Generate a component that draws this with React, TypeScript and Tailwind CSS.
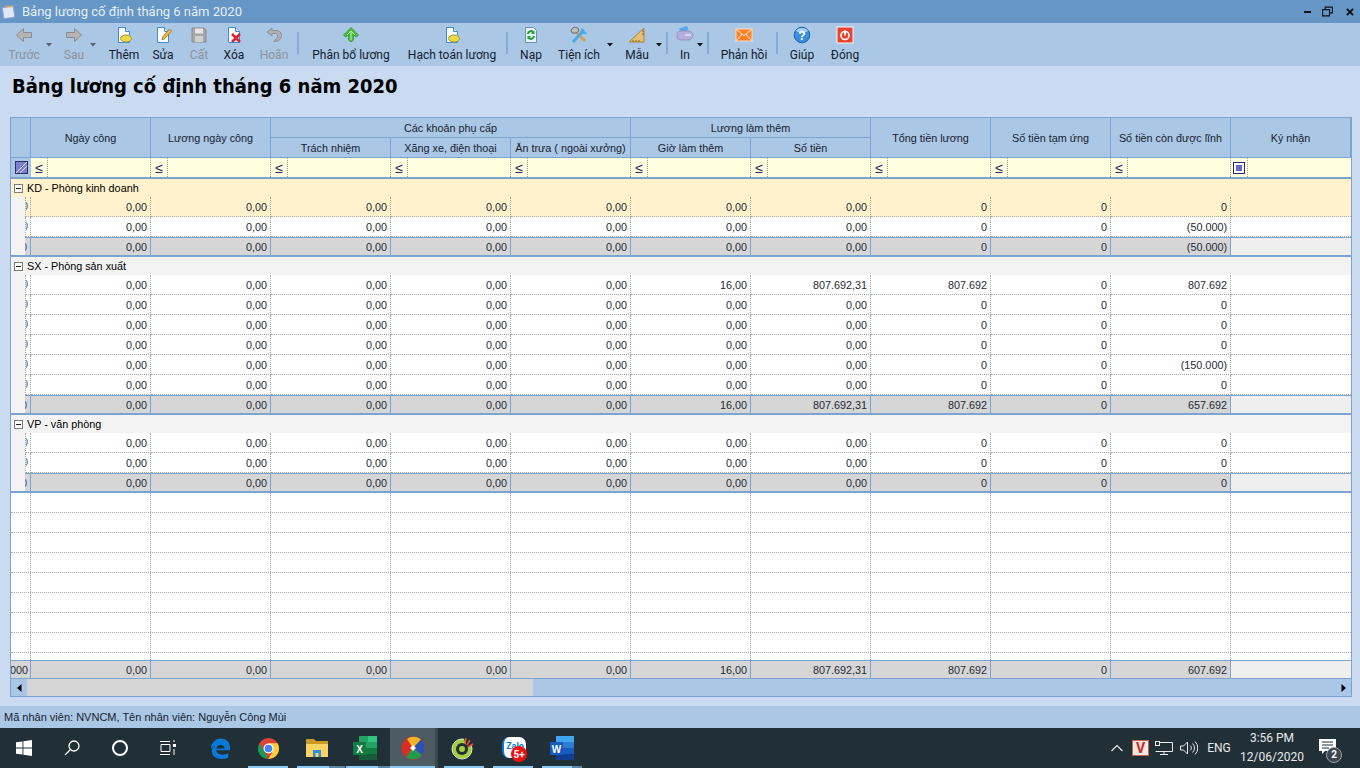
import React from "react";

const BORDER = "border-[#7da3d2]";

type Row = { kind: "group" | "data" | "sum"; label?: string; vals?: string[]; active?: boolean; first?: boolean };

const mk = (gio: string, tien: string, tong: string, linh: string) => [
  "0,00", "0,00", "0,00", "0,00", "0,00", gio, tien, tong, "0", linh, "",
];
const zero = (linh = "0") => mk("0,00", "0,00", "0", linh);

const rows: Row[] = [
  { kind: "group", label: "KD - Phòng kinh doanh", first: true },
  { kind: "data", vals: zero(), active: true },
  { kind: "data", vals: zero("(50.000)") },
  { kind: "sum", vals: zero("(50.000)") },
  { kind: "group", label: "SX - Phòng sản xuất" },
  { kind: "data", vals: mk("16,00", "807.692,31", "807.692", "807.692") },
  { kind: "data", vals: zero() },
  { kind: "data", vals: zero() },
  { kind: "data", vals: zero() },
  { kind: "data", vals: zero("(150.000)") },
  { kind: "data", vals: zero() },
  { kind: "sum", vals: mk("16,00", "807.692,31", "807.692", "657.692") },
  { kind: "group", label: "VP - văn phòng" },
  { kind: "data", vals: zero() },
  { kind: "data", vals: zero() },
  { kind: "sum", vals: zero() },
];

const Ico = ({ children, size = 18 }: { children: React.ReactNode; size?: number }) => (
  <svg width={size} height={size} viewBox="0 0 18 18">{children}</svg>
);

const Doc = ({ children }: { children?: React.ReactNode }) => (
  <Ico>
    <path d="M3.500 1.500h7l4 4v11h-11z" fill="#fff" stroke="#3f8fd0" />
    <path d="M10.500 1.500v4h4" fill="#cfe6f8" stroke="#3f8fd0" />
    {children}
  </Ico>
);

const icons: Record<string, React.ReactNode> = {
  back: (
    <Ico>
      <path d="M8.500 2.500 1.500 9l7 6.500v-4h8v-5h-8z" fill="#b4b4b4" stroke="#8c8c8c" />
    </Ico>
  ),
  next: (
    <Ico>
      <path d="M9.500 2.500 16.500 9l-7 6.500v-4h-8v-5h8z" fill="#b4b4b4" stroke="#8c8c8c" />
    </Ico>
  ),
  add: (
    <Doc>
      <ellipse cx="11" cy="12.500" rx="5.500" ry="3.500" fill="#ecd94a" stroke="#a59a24" />
    </Doc>
  ),
  edit: (
    <Doc>
      <path d="M8 14l1-3.500L15.500 3l2 2L11 12.500z" fill="#f0b93a" stroke="#9a6f12" strokeWidth="0.800" />
    </Doc>
  ),
  save: (
    <Ico>
      <path d="M2 2h12l2 2v12H2z" fill="#a6a6a6" stroke="#8b8b8b" />
      <rect x="5" y="2.500" width="8" height="5" fill="#e6e6e6" />
      <rect x="5" y="10" width="8" height="6" fill="#cfcfcf" />
    </Ico>
  ),
  del: (
    <Doc>
      <path d="M7 8l8 8M15 8l-8 8" stroke="#d8262c" strokeWidth="2.600" />
    </Doc>
  ),
  undo: (
    <Ico>
      <path d="M7 2 2 6l5 4V7.500h3.500c2.500 0 3 3.500.5 5.500l-2 2.500c5 0 7.500-3 7.500-6 0-3.500-2.500-5-5.500-5H7z" fill="#b0b0b0" stroke="#8f8f8f" />
    </Ico>
  ),
  up: (
    <Ico>
      <path d="M9 1.500 16.500 9l-2 2L11.500 9v5L9 16l-2.500-2V9L3.500 11l-2-2z" fill="#4cbb40" stroke="#2c9a2c" strokeWidth="0.800" />
      <path d="M9 5v9M9 5 5 9M9 5l4 4" fill="none" stroke="#c8efb8" />
    </Ico>
  ),
  reload: (
    <Ico>
      <path d="M3.500 1.500h8l3 3v12h-11z" fill="#e8f0f8" stroke="#6d8fb0" />
      <path d="M6 8a3 3 0 0 1 5.500-1.500M12 10a3 3 0 0 1-5.500 1.500" fill="none" stroke="#1f9e36" strokeWidth="2" />
      <path d="M12.500 4.500v3.500H9zM5.500 13.500V10H9z" fill="#1f9e36" />
    </Ico>
  ),
  tools: (
    <Ico>
      <path d="M4 4l11 11" stroke="#d99a4a" strokeWidth="2.600" />
      <path d="M3 16 14 4" stroke="#4fa8e8" strokeWidth="3" />
      <path d="M12 2.500a3.500 3.500 0 0 0 4.500 4.500" fill="none" stroke="#4fa8e8" strokeWidth="2" />
      <path d="M2 7 1 4l3-3 4 1 1 3-3 2z" fill="#bdbdbd" stroke="#6f6f6f" />
    </Ico>
  ),
  ruler: (
    <Ico>
      <path d="M1 16 16 2v14z" fill="#e7bf72" stroke="#a9823a" />
      <path d="M11 12l2-2v2z" fill="#abc7e6" />
      <path d="M5 16v-2M8 16v-2M11 16v-2M16 5h-2M16 8h-2" stroke="#8a6526" />
    </Ico>
  ),
  print: (
    <Ico>
      <path d="M3 2.500 11 0l1.500 4-8 2.500z" fill="#5aa7e6" />
      <path d="M1 8c0-2 2-3 4-3h7c3 0 5 2 5 4.500S15 14 12 14H5c-2 0-4-1-4-3z" fill="#b6aedc" stroke="#8f86bc" strokeWidth="0.700" />
      <path d="M9 9h6" stroke="#e6e2f6" strokeWidth="1.500" />
    </Ico>
  ),
  mail: (
    <Ico>
      <rect x="1" y="3" width="16" height="12" fill="#f9822a" stroke="#ffd9bb" />
      <path d="M1.500 3.500 9 9.500l7.500-6M1.500 14.500 7 8M16.500 14.500 11 8" fill="none" stroke="#ffe6d2" />
    </Ico>
  ),
  help: (
    <Ico>
      <circle cx="9" cy="9" r="7.800" fill="#3b8fe2" stroke="#1f5fa8" />
      <path d="M9 2a7 5 0 0 1 6 3c-3 2-9 2-12 0a7 5 0 0 1 6-3z" fill="#a3d0f7" />
      <text x="9" y="13.500" textAnchor="middle" fontSize="12" fontWeight="700" fill="#fff" fontFamily="Liberation Sans">?</text>
    </Ico>
  ),
  power: (
    <Ico>
      <rect x="1" y="1" width="16" height="16" fill="#e8432f" stroke="#f8f8f8" />
      <circle cx="9" cy="9.500" r="4" fill="none" stroke="#fff" strokeWidth="1.600" />
      <path d="M9 4.500v5" stroke="#fff" strokeWidth="1.800" />
    </Ico>
  ),
};

function TBtn({ label, icon, cls, off }: { label: string; icon: string; cls: string; off?: boolean }) {
  return (
    <div className={`flex flex-col items-center shrink-0 ${cls}`}>
      <div className="h-[18px] mt-[3px] flex items-center">{icons[icon]}</div>
      <span className={`mt-[3px] text-[12px] leading-[16px] whitespace-nowrap ${off ? "text-[#8d9299]" : "text-[#14202c]"}`}>{label}</span>
    </div>
  );
}

const Caret = ({ cls, off }: { cls: string; off?: boolean }) => (
  <div className={`w-[6px] h-[5px] shrink-0 mt-[20px] ${cls}`}>
    <svg width="6" height="4" viewBox="0 0 6 4"><path d="M0 0h6L3 3.500z" fill={off ? "#59626d" : "#10161c"} /></svg>
  </div>
);
const Sep = ({ cls }: { cls: string }) => <div className={`w-[2px] h-[22px] mt-[9px] bg-[#86abd8] shrink-0 ${cls}`} />;

function Toolbar() {
  return (
    <div className="h-[43px] bg-[#abc7e6] flex pl-[4px] items-start">
      <TBtn off label="Trước" icon="back" cls="w-[40px]" />
      <Caret off cls="ml-[2px] mr-[2px]" />
      <TBtn off label="Sau" icon="next" cls="ml-[4px] w-[32px]" />
      <Caret off cls="" />
      <TBtn label="Thêm" icon="add" cls="ml-[12px] w-[32px]" />
      <TBtn label="Sửa" icon="edit" cls="ml-[8px] w-[30px]" />
      <TBtn off label="Cất" icon="save" cls="ml-[6px] w-[30px]" />
      <TBtn label="Xóa" icon="del" cls="ml-[4px] w-[32px]" />
      <TBtn off label="Hoãn" icon="undo" cls="ml-[4px] w-[40px]" />
      <Sep cls="ml-[3px]" />
      <TBtn label="Phân bổ lương" icon="up" cls="ml-[12px] w-[80px]" />
      <TBtn label="Hạch toán lương" icon="add" cls="ml-[12px] w-[98px]" />
      <Sep cls="ml-[5px]" />
      <TBtn label="Nạp" icon="reload" cls="ml-[8px] w-[30px]" />
      <TBtn label="Tiện ích" icon="tools" cls="ml-[10px] w-[46px]" />
      <Caret cls="ml-[5px]" />
      <TBtn label="Mẫu" icon="ruler" cls="ml-[9px] w-[30px]" />
      <Caret cls="ml-[4px]" />
      <Sep cls="ml-[4px]" />
      <TBtn label="In" icon="print" cls="ml-[7px] w-[20px]" />
      <Caret cls="ml-[2px]" />
      <Sep cls="ml-[4px]" />
      <TBtn label="Phản hồi" icon="mail" cls="ml-[10px] w-[50px]" />
      <Sep cls="ml-[7px]" />
      <TBtn label="Giúp" icon="help" cls="ml-[9px] w-[30px]" />
      <TBtn label="Đóng" icon="power" cls="ml-[11px] w-[34px]" />
    </div>
  );
}

function TitleBar() {
  return (
    <div className="h-[23px] bg-[#6596c6] flex items-center pl-[2px] pr-[6px]">
      <svg width="14" height="14" viewBox="0 0 14 14">
        <rect x="1" y="2" width="11" height="11" rx="1" fill="#dfe9fb" stroke="#8fa5e0" transform="rotate(-8 6 7)" />
        <path d="M3 1.500h8" stroke="#f2a33a" strokeWidth="2" strokeDasharray="1.500 1" />
      </svg>
      <span className="ml-[6px] text-[13px] text-[#e6eef7]">Bảng lương cố định tháng 6 năm 2020</span>
      <div className="ml-auto flex items-center">
        <div className="w-[7px] h-[2px] bg-[#0b1118]" />
        <svg width="11" height="11" viewBox="0 0 12 11" className="ml-[11px]">
          <path d="M3.500 3V.700h7.800v6.300H8.500M.700 3.500h7.500v6.800H.700z" fill="none" stroke="#0b1118" strokeWidth="1.200" />
        </svg>
        <svg width="8" height="8" viewBox="0 0 9 9" className="ml-[13px]">
          <path d="M1 1l7 7M8 1 1 8" stroke="#0b1118" strokeWidth="2.200" />
        </svg>
      </div>
    </div>
  );
}

const HCell = ({ cls, children }: { cls: string; children?: React.ReactNode }) => (
  <div className={`bg-[#abc7e6] border-r border-b pt-[1px] ${BORDER} flex items-center justify-center whitespace-nowrap ${cls}`}>{children}</div>
);

function GridHeader() {
  return (
    <div className="grid grid-cols-[20px_repeat(11,120px)] grid-rows-[20px_20px] shrink-0 text-[#17222e]">
      <HCell cls="row-span-2" />
      <HCell cls="row-span-2">Ngày công</HCell>
      <HCell cls="row-span-2">Lương ngày công</HCell>
      <HCell cls="col-span-3">Các khoản phụ cấp</HCell>
      <HCell cls="col-span-2">Lương làm thêm</HCell>
      <HCell cls="row-span-2">Tổng tiền lương</HCell>
      <HCell cls="row-span-2">Số tiền tạm ứng</HCell>
      <HCell cls="row-span-2">Số tiền còn được lĩnh</HCell>
      <HCell cls="row-span-2">Ký nhận</HCell>
      <HCell cls="">Trách nhiệm</HCell>
      <HCell cls="">Xăng xe, điện thoại</HCell>
      <HCell cls="">Ăn trưa ( ngoài xưởng)</HCell>
      <HCell cls="">Giờ làm thêm</HCell>
      <HCell cls="">Số tiền</HCell>
    </div>
  );
}

function FilterRow() {
  const cols = Array.from({ length: 10 });
  return (
    <div className={`flex h-[21px] shrink-0 bg-[#ffffe0] border-b-2 ${BORDER}`}>
      <div className="w-[20px] shrink-0 bg-[#abc7e6] flex items-center justify-center">
        <svg width="13" height="13" viewBox="0 0 13 13">
          <rect x=".5" y=".5" width="12" height="12" fill="#7c7fd0" stroke="#2b2f66" />
          <path d="M1 12 12 1M5 12l7-7" stroke="#e6e6fa" />
        </svg>
      </div>
      {cols.map((_, i) => (
        <div key={i} className="w-[120px] shrink-0 border-r border-dotted border-[#a0a0a0] flex">
          <div className="w-[17px] border-r border-dotted border-[#a0a0a0] flex items-center justify-center">
            <span className="text-[14px] leading-none text-[#2b2f66]">≤</span>
          </div>
        </div>
      ))}
      <div className="w-[120px] shrink-0 flex">
        <div className="w-[17px] border-r border-dotted border-[#a0a0a0] flex items-center justify-center">
          <div className="w-[12px] h-[12px] border border-[#2b2f66] bg-white flex items-center justify-center">
            <div className="w-[6px] h-[6px] bg-[#6a68c8]" />
          </div>
        </div>
      </div>
    </div>
  );
}

function GroupRow({ row }: { row: Row }) {
  return (
    <div className={`h-[18px] shrink-0 flex items-center pl-[3px] ${row.first ? "bg-[#fff2cc]" : "bg-[#f3f3f3]"}`}>
      <div className="w-[9px] h-[9px] border border-[#7d7d7d] bg-white flex items-center justify-center">
        <div className="w-[5px] h-px bg-[#222]" />
      </div>
      <span className="ml-[4px] text-black">{row.label}</span>
    </div>
  );
}

function DataRow({ row }: { row: Row }) {
  const sum = row.kind === "sum";
  const bg = sum ? "bg-[#d6d6d6]" : row.active ? "bg-[#fff2cc]" : "bg-white";
  const rowBorder = sum ? `border-b-2 ${BORDER}` : "border-b border-dotted border-[#a8a8a8]";
  const sep = sum ? `border-r ${BORDER}` : "border-r border-dotted border-[#a8a8a8]";
  return (
    <div className="h-[20px] shrink-0 flex">
      <div className={`w-[14px] shrink-0 bg-[#f3f3f3] ${sum ? `border-b-2 ${BORDER}` : ""}`} />
      <div className={`w-[6px] shrink-0 overflow-hidden ${bg} ${rowBorder} ${sep} ${sum ? `border-t ${BORDER}` : "border-l border-dotted border-l-[#a8a8a8]"}`}>
        <div className="w-[6px] -ml-[4px] text-[#1c5f96] leading-[19px]">0</div>
      </div>
      {row.vals!.map((v, i) => {
        const last = i === 10;
        const cellBg = last && sum ? "bg-[#efefef]" : bg;
        return (
          <div
            key={i}
            className={`w-[120px] shrink-0 ${cellBg} ${rowBorder} ${last ? "" : sep} ${sum ? `border-t ${BORDER}` : ""} text-right pr-[3px] ${sum ? "leading-[18px]" : "leading-[20px]"} text-[#1e2a36]`}
          >
            {v}
          </div>
        );
      })}
    </div>
  );
}

function BlankArea() {
  return (
    <div className="flex-1 min-h-0 overflow-hidden bg-white flex flex-col">
      {Array.from({ length: 9 }).map((_, r) => (
        <div key={r} className="h-[20px] shrink-0 flex border-b border-dotted border-[#a8a8a8]">
          <div className="w-[20px] shrink-0 border-r border-dotted border-[#a8a8a8]" />
          {Array.from({ length: 11 }).map((_, c) => (
            <div key={c} className={`w-[120px] shrink-0 ${c < 10 ? "border-r border-dotted border-[#a8a8a8]" : ""}`} />
          ))}
        </div>
      ))}
    </div>
  );
}

function FooterRow() {
  const vals = mk("16,00", "807.692,31", "807.692", "607.692");
  return (
    <div className={`h-[19px] shrink-0 flex border-t ${BORDER} border-b`}>
      <div className={`w-[20px] shrink-0 bg-[#d6d6d6] border-r ${BORDER} overflow-hidden flex justify-end pr-[2px] leading-[18px] text-[#1e2a36]`}>000</div>
      {vals.map((v, i) => (
        <div
          key={i}
          className={`w-[120px] shrink-0 text-right pr-[3px] leading-[18px] text-[#1e2a36] ${i === 10 ? "bg-[#efefef]" : `bg-[#d6d6d6] border-r ${BORDER}`}`}
        >
          {v}
        </div>
      ))}
    </div>
  );
}

function Scrollbar() {
  return (
    <div className="h-[17px] shrink-0 bg-[#abc7e6] flex items-center">
      <div className="w-[16px] flex justify-center">
        <svg width="5" height="8" viewBox="0 0 5 8"><path d="M4.500 0v8L0 4z" fill="#000" /></svg>
      </div>
      <div className="w-[506px] h-full bg-[#d6d6d6]" />
      <div className="ml-auto w-[16px] flex justify-center">
        <svg width="5" height="8" viewBox="0 0 5 8"><path d="M.500 0v8L5 4z" fill="#000" /></svg>
      </div>
    </div>
  );
}

const Slot = ({ cls, children }: { cls: string; children: React.ReactNode }) => (
  <div className={`h-full shrink-0 flex items-center justify-center ${cls}`}>{children}</div>
);
const Under = ({ cls }: { cls: string }) => <div className={`absolute bottom-0 h-[2px] ${cls}`} />;

function Taskbar() {
  return (
    <div className="relative h-[40px] bg-[#212f37] flex items-stretch text-[#e8eaec]">
      <Slot cls="w-[48px]">
        <svg width="16" height="16" viewBox="0 0 16 16" fill="#fff">
          <path d="M0 2.300 6.500 1.400v6.200H0zM7.400 1.300 16 0v7.600H7.400zM0 8.400h6.500v6.200L0 13.700zM7.400 8.400H16V16l-8.600-1.300z" />
        </svg>
      </Slot>
      <Slot cls="w-[48px]">
        <svg width="18" height="18" viewBox="0 0 18 18" fill="none" stroke="#fff" strokeWidth="1.300">
          <circle cx="11" cy="7" r="5" />
          <path d="M7.500 10.500 2 16" />
        </svg>
      </Slot>
      <Slot cls="w-[48px]">
        <div className="w-[16px] h-[16px] rounded-full border-[2.500px] border-white" />
      </Slot>
      <Slot cls="w-[48px]">
        <svg width="16" height="16" viewBox="0 0 16 16" fill="none" stroke="#fff">
          <path d="M0 1.500h10M0 14.500h10M1 4.500h9v7H1z" />
          <rect x="13" y="4" width="3" height="3" fill="#fff" stroke="none" />
          <path d="M14 0v2M14 9v6" />
        </svg>
      </Slot>
      <Slot cls="w-[48px] ml-[4px]">
        <svg width="22" height="23" viewBox="0 0 24 24">
          <path d="M2 13C2 6 7 1 13 1c6 0 10 4 10 10v3H8c.5 5 8 6 13 3v5c-8 3-18 1-18-7 0-2 1-4 3-6-2 1-3 2-4 4zm6-1h9c0-5-8-5-9 0z" fill="#0a78d4" />
        </svg>
      </Slot>
      <Slot cls="w-[48px]">
        <svg width="23" height="23" viewBox="0 0 24 24">
          <circle cx="12" cy="12" r="11" fill="#db4437" />
          <path d="M12 23A11 11 0 0 1 2.500 6.500L8 16z" fill="#0f9d58" />
          <path d="M12 23a11 11 0 0 0 9.500-16.500H12l4 9z" fill="#ffcd40" />
          <circle cx="12" cy="12" r="5.200" fill="#fff" />
          <circle cx="12" cy="12" r="4" fill="#4285f4" />
        </svg>
      </Slot>
      <Slot cls="w-[48px] ml-[1px]">
        <svg width="22" height="20" viewBox="0 0 22 20">
          <path d="M0 1h8l2 2h12v15H0z" fill="#c99a28" />
          <path d="M0 6h22v13H0z" fill="#fad467" />
          <rect x="7" y="12" width="8" height="7" fill="#2f8fd8" />
          <rect x="9.500" y="15" width="3" height="4" fill="#fad467" />
        </svg>
      </Slot>
      <Slot cls="w-[48px]">
        <svg width="24" height="24" viewBox="0 0 24 24">
          <rect x="6" y="0" width="18" height="24" rx="1" fill="#21a366" />
          <rect x="15" y="0" width="9" height="6" fill="#33c481" />
          <rect x="6" y="12" width="18" height="6" fill="#107c41" />
          <rect x="6" y="18" width="18" height="6" fill="#185c37" />
          <rect x="0" y="6" width="13" height="13" fill="#107c41" />
          <text x="6.500" y="16.500" textAnchor="middle" fontSize="10" fontWeight="700" fill="#fff" fontFamily="Liberation Sans">X</text>
        </svg>
      </Slot>
      <Slot cls="w-[45px] ml-[1px] bg-[#4d5c63]">
        <svg width="24" height="24" viewBox="0 0 24 24">
          <circle cx="12" cy="12" r="11.500" fill="#d92c27" />
          <path d="M12 12 6 3A11.500 11.500 0 0 1 20 3.500L18 7z" fill="#f0b429" />
          <path d="M12 12 20 3.500A11.500 11.500 0 0 1 21 19z" fill="#2b4fb8" />
          <path d="M12 12 21 19A11.500 11.500 0 0 1 5 21z" fill="#1f9d4d" />
          <path d="M12 9l3 3-3 3-3-3z" fill="#fff" />
        </svg>
      </Slot>
      <div className="w-[3px] bg-[#3a474d] shrink-0" />
      <Slot cls="w-[48px] ml-[1px]">
        <svg width="24" height="24" viewBox="0 0 24 24">
          <circle cx="11" cy="13" r="10" fill="#a6ce39" stroke="#dfe6dd" strokeWidth="1" />
          <circle cx="11" cy="13" r="6" fill="#212f37" />
          <circle cx="11" cy="13" r="3" fill="#a6ce39" />
          <path d="M13 3h8v6l-5 2z" fill="#212f37" />
          <path d="M14 8l1-6M16 9l3-5M17 11l5-3" stroke="#e8503a" strokeWidth="1.500" />
        </svg>
      </Slot>
      <Slot cls="w-[48px] ml-[3px] relative">
        <div className="w-[24px] h-[21px] mb-[2px] rounded-[7px] bg-white border-l-[2px] border-[#0a78d4] flex items-center justify-center text-[9px] font-bold text-[#0a78d4]">Zalo</div>
        <div className="absolute left-[21px] top-[18px] w-[16px] h-[16px] rounded-full bg-[#f01010] text-white text-[10px] font-bold flex items-center justify-center">5+</div>
      </Slot>
      <Slot cls="w-[48px]">
        <svg width="24" height="24" viewBox="0 0 24 24">
          <rect x="6" y="0" width="18" height="24" rx="1" fill="#2b7cd3" />
          <rect x="6" y="0" width="18" height="6" fill="#41a5ee" />
          <rect x="6" y="12" width="18" height="6" fill="#185abd" />
          <rect x="6" y="18" width="18" height="6" fill="#103f91" />
          <rect x="0" y="6" width="13" height="13" fill="#185abd" />
          <text x="6.500" y="16.500" textAnchor="middle" fontSize="10" fontWeight="700" fill="#fff" fontFamily="Liberation Sans">W</text>
        </svg>
      </Slot>
      <Under cls="left-[248px] w-[40px] bg-[#8cc8f0]" />
      <Under cls="left-[297px] w-[32px] bg-[#8cc8f0]" />
      <Under cls="left-[329px] w-[16px] bg-[#5a88a8]" />
      <Under cls="left-[346px] w-[32px] bg-[#8cc8f0]" />
      <Under cls="left-[378px] w-[12px] bg-[#5a88a8]" />
      <Under cls="left-[390px] w-[45px] bg-[#8cc8f0]" />
      <Under cls="left-[444px] w-[40px] bg-[#8cc8f0]" />
      <Under cls="left-[493px] w-[40px] bg-[#8cc8f0]" />
      <Under cls="left-[542px] w-[30px] bg-[#8cc8f0]" />
      <Under cls="left-[572px] w-[10px] bg-[#5a88a8]" />

      <div className="ml-auto flex items-center">
        <svg width="12" height="8" viewBox="0 0 12 8" fill="none" stroke="#e8eaec" strokeWidth="1.200"><path d="M.500 7 6 1.500 11.500 7" /></svg>
        <div className="ml-[9px] w-[17px] h-[16px] bg-[#f4e8e2] border border-[#c9605a] flex items-center justify-center text-[14px] font-bold text-[#d0272d] leading-none">V</div>
        <svg width="18" height="15" viewBox="0 0 18 15" fill="none" stroke="#e8eaec" className="ml-[6px]">
          <path d="M4 1.500h13.500v9H.5M9 10.500v3M5 13.500h8" />
          <rect x="0.500" y="0.500" width="4" height="4" fill="#212f37" />
        </svg>
        <svg width="18" height="14" viewBox="0 0 18 14" fill="none" stroke="#e8eaec" className="ml-[7px]">
          <path d="M.5 5v4h3l4 4V1l-4 4zM10 4.500a3 3 0 0 1 0 5M12.500 2.500a6 6 0 0 1 0 9M15 .5a9 9 0 0 1 0 13" />
        </svg>
        <span className="ml-[9px] w-[24px] text-[12px] text-center">ENG</span>
        <div className="ml-[10px] w-[62px] flex flex-col items-center text-[12px] leading-[19px]">
          <span>3:56 PM</span>
          <span>12/06/2020</span>
        </div>
        <div className="relative ml-[16px] mr-[26px] w-[15px] h-[13px] mb-[6px]">
          <svg width="17" height="16" viewBox="0 0 17 16">
            <path d="M0 0h17v12H6l-3 3v-3H0z" fill="#fff" />
            <path d="M3 3h11M3 6h11M3 9h7" stroke="#212f37" />
          </svg>
          <div className="absolute left-[7px] top-[8px] w-[16px] h-[16px] rounded-full bg-[#3c474d] border border-[#9aa2a6] text-[10px] font-bold flex items-center justify-center text-white">2</div>
        </div>
      </div>
    </div>
  );
}

export default function App() {
  return (
    <div className="w-[1360px] h-[768px] overflow-hidden flex flex-col font-['Roboto',sans-serif]">
      <TitleBar />
      <Toolbar />
      <div className="h-[640px] bg-[#c9daf1] flex flex-col pl-[10px] pt-[8px] pb-[9px]">
        <h1 className="ml-[2px] h-[43px] text-[20px] leading-[24px] font-bold text-black font-['DejaVu_Sans_Condensed','DejaVu_Sans',sans-serif]">
          Bảng lương cố định tháng 6 năm 2020
        </h1>
        <div className={`w-[1342px] flex-1 min-h-0 border ${BORDER} flex flex-col text-[10.8px] font-['Liberation_Sans',sans-serif]`}>
          <GridHeader />
          <FilterRow />
          {rows.map((r, i) => (r.kind === "group" ? <GroupRow key={i} row={r} /> : <DataRow key={i} row={r} />))}
          <BlankArea />
          <FooterRow />
          <Scrollbar />
        </div>
      </div>
      <div className="h-[22px] bg-[#abc7e6] flex items-center pl-[4px] text-[11px] text-[#17222e] font-['Liberation_Sans',sans-serif]">
        Mã nhân viên: NVNCM, Tên nhân viên: Nguyễn Công Mùi
      </div>
      <Taskbar />
    </div>
  );
}
